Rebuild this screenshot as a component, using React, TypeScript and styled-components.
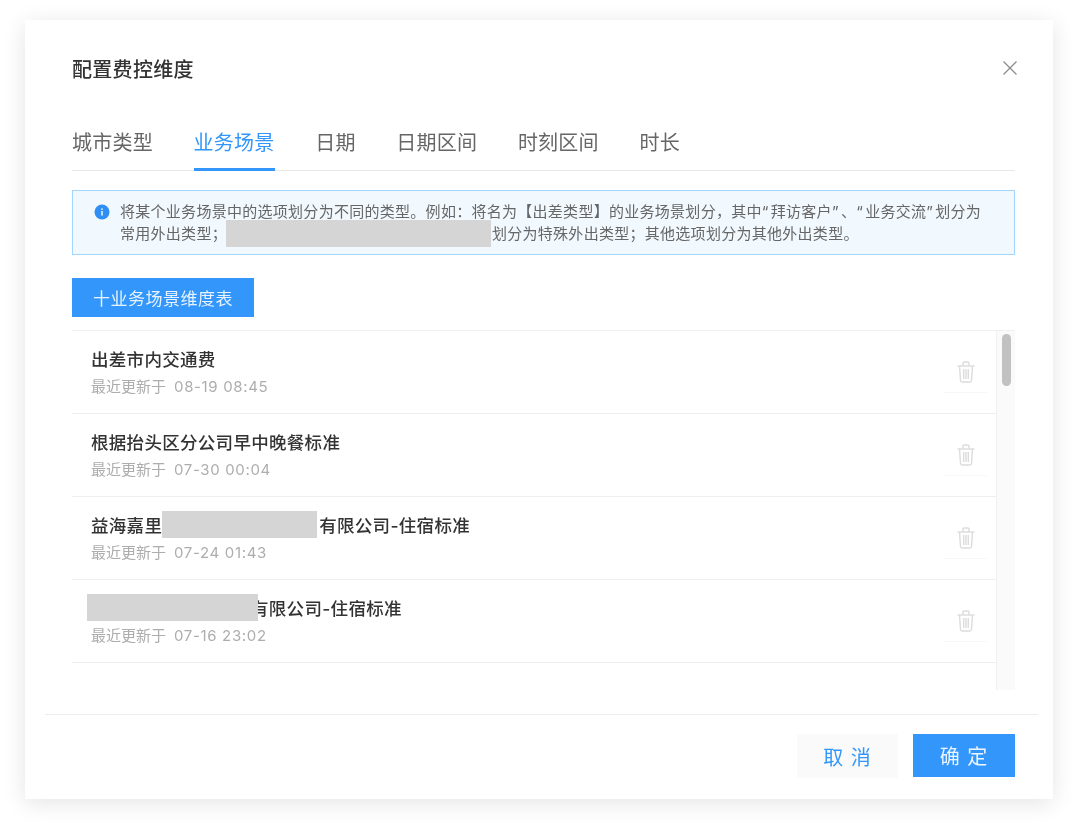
import React from "react";
import styled, { createGlobalStyle } from "styled-components";

const FONT = `Inter, "Noto Sans CJK SC", sans-serif`;

const GlobalStyle = createGlobalStyle`
    html, body {
        margin: 0;
        padding: 0;
        background: #fff;
        font-family: ${FONT};
    }
`;

const tabs = ["城市类型", "业务场景", "日期", "日期区间", "时刻区间", "时长"];

const rows = [
    { id: 1, before: "出差市内交通费", time: "08-19 08:45" },
    { id: 2, before: "根据抬头区分公司早中晚餐标准", time: "07-30 00:04" },
    { id: 3, before: "益海嘉里", mask: 155, after: "有限公司-住宿标准", time: "07-24 01:43" },
    { id: 4, before: "", mask: 171, after: "有限公司-住宿标准", time: "07-16 23:02", outdent: true },
];

const TrashIcon = () => (
    <svg width="18" height="22" viewBox="0 0 18 22" fill="none" stroke="#dcdcdc" strokeWidth="1.4">
        <path d="M0.5 5h17" />
        <path d="M6 5V2.2C6 1.5 6.5 1 7.2 1h3.6c.7 0 1.2.5 1.2 1.2V5" />
        <path d="M2.5 5l1 14.5c.1.9.7 1.5 1.6 1.5h7.8c.9 0 1.5-.6 1.6-1.5l1-14.5" />
        <path d="M6.7 8v10M9 8v10M11.3 8v10" />
    </svg>
);

const App: React.FC = () => {
    return (
        <Page>
            <GlobalStyle />
            <Dialog>
                <Header>
                    <Title>配置费控维度</Title>
                    <svg width="14" height="14" viewBox="0 0 14 14" stroke="#8c8c8c" strokeWidth="1.3">
                        <path d="M0.5 0.5l13 13M13.5 0.5l-13 13" />
                    </svg>
                </Header>
                <Tabs>
                    {tabs.map((tab) => (
                        <Tab key={tab} $active={tab === "业务场景"}>
                            {tab}
                        </Tab>
                    ))}
                </Tabs>
                <Notice>
                    <svg width="16" height="16" viewBox="0 0 16 16">
                        <circle cx="8" cy="8" r="7.5" fill="#2f8ff5" />
                        <rect x="7.3" y="7" width="1.4" height="4.6" fill="#fff" />
                        <rect x="7.3" y="4.4" width="1.4" height="1.5" fill="#fff" />
                    </svg>
                    <NoticeText>
                        <NoticeLine>
                            将某个业务场景中的选项划分为不同的类型。例如：将名为【出差类型】的业务场景划分，其中<Quote>“</Quote>拜访客户<Quote>”</Quote>、<Quote>“</Quote>业务交流<Quote>”</Quote>划分为
                        </NoticeLine>
                        <NoticeLine>
                            常用外出类型；<NoticeMask />划分为特殊外出类型；其他选项划分为其他外出类型。
                        </NoticeLine>
                    </NoticeText>
                </Notice>
                <AddButton>十业务场景维度表</AddButton>
                <ListArea>
                    <List>
                        {rows.map((row) => (
                            <Row key={row.id}>
                                <RowText>
                                    <RowTitle>
                                        {row.before}
                                        {row.mask && <TitleMask $width={row.mask} $outdent={row.outdent} />}
                                        {row.after}
                                    </RowTitle>
                                    <RowMeta>
                                        最近更新于<RowTime>{row.time}</RowTime>
                                    </RowMeta>
                                </RowText>
                                <RowAction>
                                    <TrashIcon />
                                </RowAction>
                            </Row>
                        ))}
                    </List>
                    <Track>
                        <Thumb />
                    </Track>
                </ListArea>
                <Footer>
                    <CancelButton>取 消</CancelButton>
                    <ConfirmButton>确 定</ConfirmButton>
                </Footer>
            </Dialog>
        </Page>
    );
};

const Page = styled.div`
    width: 1080px;
    height: 835px;
    box-sizing: border-box;
    padding: 20px 27px 36px 25px;
    overflow: hidden;
    background: #fff;
`;

const Dialog = styled.div`
    height: 779px;
    box-sizing: border-box;
    padding: 0 38px 0 47px;
    background: #fff;
    box-shadow: 0 4px 22px rgba(0, 0, 0, 0.11);
    display: flex;
    flex-direction: column;
    filter: blur(0.35px);
`;

const Header = styled.div`
    height: 98px;
    flex: none;
    display: flex;
    justify-content: space-between;
    align-items: center;
    box-sizing: border-box;

    svg {
        margin: -3px -2px 0 0;
    }
`;

const Title = styled.div`
    font-size: 20px;
    font-weight: 500;
    letter-spacing: 0.3px;
    color: #333;
    margin-top: -2px;
`;

const Tabs = styled.div`
    flex: none;
    height: 53px;
    box-sizing: border-box;
    display: flex;
    gap: 40.6px;
    border-bottom: 1px solid #e8e8e8;
`;

const Tab = styled.div<{ $active?: boolean }>`
    height: 53px;
    box-sizing: border-box;
    padding-top: 10px;
    font-size: 20px;
    line-height: 30px;
    letter-spacing: 0.25px;
    color: ${({ $active }) => ($active ? "#3296fa" : "#666")};
    border-bottom: 3px solid ${({ $active }) => ($active ? "#3296fa" : "transparent")};
`;

const Notice = styled.div`
    flex: none;
    margin-top: 19px;
    height: 65px;
    box-sizing: border-box;
    padding: 10px 20px 0 21px;
    display: flex;
    gap: 10px;
    background: #f1f8fe;
    border: 1px solid #a3d6ff;

    svg {
        flex: none;
        margin-top: 3px;
    }
`;

const NoticeText = styled.div`
    font-size: 15px;
    line-height: 21.5px;
    letter-spacing: 0.28px;
    color: #666;
`;

const NoticeLine = styled.div`
    white-space: nowrap;
`;

const Quote = styled.span`
    display: inline-block;
    width: 9px;
`;

const NoticeMask = styled.span`
    display: inline-block;
    width: 265px;
    height: 27px;
    margin: -6px 1px -4px -1px;
    vertical-align: middle;
    background: #d5d5d5;
`;

const AddButton = styled.div`
    flex: none;
    margin-top: 23px;
    width: 182px;
    height: 39px;
    display: flex;
    align-items: center;
    justify-content: center;
    background: #3296fa;
    color: #e6f2fe;
    font-size: 17px;
    letter-spacing: 0.5px;
`;

const ListArea = styled.div`
    flex: none;
    margin-top: 13px;
    height: 360px;
    display: flex;
    overflow: hidden;
    border-top: 1px solid #f0f0f0;
    box-sizing: border-box;
`;

const List = styled.div`
    flex: 1;
    min-width: 0;
`;

const Row = styled.div`
    height: 83px;
    box-sizing: border-box;
    padding-left: 19px;
    display: flex;
    justify-content: space-between;
    border-bottom: 1px solid #eeeeee;
`;

const RowText = styled.div`
    padding-top: 16px;
`;

const RowTitle = styled.div`
    font-size: 17.5px;
    line-height: 26px;
    font-weight: 500;
    letter-spacing: 0.3px;
    color: #333;
    white-space: nowrap;
`;

const TitleMask = styled.span<{ $width: number; $outdent?: boolean }>`
    position: relative;
    z-index: 1;
    display: inline-block;
    width: ${({ $width }) => $width}px;
    height: 27px;
    margin: -6px ${({ $outdent }) => ($outdent ? "-7px" : "2px")} 0 ${({ $outdent }) => ($outdent ? "-4px" : "0")};
    vertical-align: middle;
    background: #d5d5d5;
`;

const RowMeta = styled.div`
    margin-top: 4px;
    font-size: 15px;
    line-height: 20px;
    color: #adadad;
`;

const RowTime = styled.span`
    margin-left: 8px;
    letter-spacing: 0.65px;
`;

const RowAction = styled.div`
    width: 43px;
    height: 62px;
    margin-right: 9px;
    box-sizing: border-box;
    padding-top: 30px;
    display: flex;
    justify-content: center;
    border-bottom: 1px solid #f7f7f7;
`;

const Track = styled.div`
    flex: none;
    width: 19px;
    box-sizing: border-box;
    padding: 3px 4px 0 5px;
    background: #fafafa;
    border-left: 1px solid #f0f0f0;
`;

const Thumb = styled.div`
    height: 52px;
    border-radius: 5px;
    background: #c1c1c1;
`;

const Footer = styled.div`
    flex: none;
    margin: 24px -23px 0 -27px;
    padding: 19px 23px 0 0;
    border-top: 1px solid #ececec;
    display: flex;
    justify-content: flex-end;
    gap: 15px;
`;

const CancelButton = styled.div`
    width: 101px;
    height: 44px;
    display: flex;
    align-items: center;
    justify-content: center;
    background: #fafafa;
    color: #3296fa;
    font-size: 20px;
    letter-spacing: 1px;
`;

const ConfirmButton = styled(CancelButton)`
    width: 102px;
    height: 43px;
    background: #3296fa;
    color: #eaf4fe;
`;

export default App;
